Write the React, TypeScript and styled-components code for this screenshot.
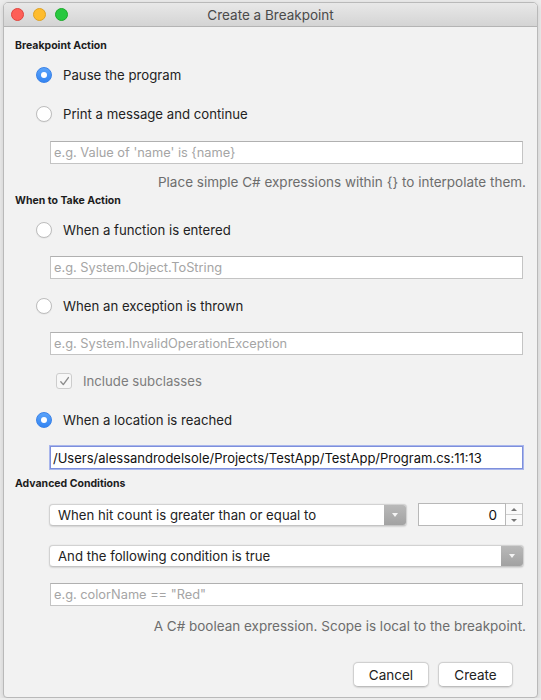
import React, { useState } from "react";
import styled, { createGlobalStyle, css } from "styled-components";

const GlobalStyle = createGlobalStyle`
  html, body {
    margin: 0;
    padding: 0;
    background: #ececec;
  }
  * {
    box-sizing: border-box;
  }
  body {
    font-family: Inter, "Liberation Sans", Arial, sans-serif;
    color: #262626;
  }
`;

const Window = styled.div`
  width: 535px;
  margin: 2px 0 0 3px;
  height: 696px;
  background: #f2f2f2;
  border: 1px solid #b9b9b9;
  border-radius: 5px 5px 4px 4px;
  box-shadow: 0 2px 6px rgba(0, 0, 0, 0.15);
  display: flex;
  flex-direction: column;
  overflow: hidden;
`;

const TitleBar = styled.div`
  height: 24px;
  flex: none;
  display: flex;
  align-items: center;
  position: relative;
  background: linear-gradient(#e8e8e8, #d4d4d4);
  border-bottom: 1px solid #b4b4b4;
`;

const Lights = styled.div`
  display: flex;
  gap: 9px;
  padding-left: 7px;
`;

const Light = styled.span<{ $color: string; $edge: string }>`
  width: 13px;
  height: 13px;
  border-radius: 50%;
  background: ${({ $color }) => $color};
  border: 0.5px solid ${({ $edge }) => $edge};
`;

const Title = styled.div`
  position: absolute;
  inset: 0;
  display: flex;
  align-items: center;
  justify-content: center;
  font-size: 13.5px;
  color: #4a4a4a;
  pointer-events: none;
`;

const Body = styled.div`
  flex: 1;
  display: flex;
  flex-direction: column;
  padding: 0 13px 0 11px;
`;

const SectionTitle = styled.div<{ $top: number }>`
  margin-top: ${({ $top }) => $top}px;
  height: 14px;
  line-height: 14px;
  font-size: 10.5px;
  font-weight: 700;
  color: #1c1c1c;
`;

const OptionRow = styled.label<{ $top: number }>`
  margin-top: ${({ $top }) => $top}px;
  height: 20px;
  display: flex;
  align-items: center;
  gap: 11px;
  padding-left: 21px;
  font-size: 13.2px;
  color: #222;
`;

const RadioDot = styled.span<{ $on: boolean }>`
  width: 16px;
  height: 16px;
  border-radius: 50%;
  flex: none;
  display: flex;
  align-items: center;
  justify-content: center;
  ${({ $on }) =>
    $on
      ? css`
          background: linear-gradient(#5aa3fa, #3485f2);
          border: 1px solid #3a82e8;
          &::after {
            content: "";
            width: 6px;
            height: 6px;
            border-radius: 50%;
            background: #fff;
          }
        `
      : css`
          background: #fff;
          border: 1px solid #bdbdbd;
          box-shadow: 0 0.5px 1px rgba(0, 0, 0, 0.08);
        `}
`;

const Field = styled.input<{ $top: number; $focused?: boolean }>`
  margin: ${({ $top }) => $top}px 1px 0 35px;
  height: 23px;
  flex: none;
  padding: 0 3px;
  font: inherit;
  font-size: 12.8px;
  color: #111;
  background: #fff;
  border: 1px solid #c4c4c4;
  border-top-color: #b0b0b0;
  outline: none;
  &::placeholder {
    color: #a5a5a5;
  }
  ${({ $focused }) =>
    $focused &&
    css`
      border: 1px solid #7d8fdc;
      box-shadow: 0 0 0 1px #a9b6ec;
      font-size: 13px;
      padding-left: 2px;
    `}
`;

const Hint = styled.div<{ $top: number }>`
  margin: ${({ $top }) => $top}px -2px 0 0;
  height: 16px;
  line-height: 16px;
  text-align: right;
  font-size: 13.5px;
  color: #6d6d6d;
`;

const CheckRow = styled.label<{ $top: number }>`
  margin: ${({ $top }) => $top}px 0 0 41px;
  height: 20px;
  display: flex;
  align-items: center;
  gap: 11px;
  font-size: 13.2px;
  color: #7d7d7d;
`;

const CheckBox = styled.span`
  width: 16px;
  height: 16px;
  border-radius: 3px;
  border: 1px solid #cdcdcd;
  background: #f7f7f7;
  display: flex;
  align-items: center;
  justify-content: center;
`;

const ConditionRow = styled.div<{ $top: number }>`
  margin: ${({ $top }) => $top}px 0 0 34px;
  display: flex;
  align-items: center;
  gap: 11px;
`;

const Select = styled.div<{ $top?: number; $width?: number }>`
  ${({ $top }) => $top !== undefined && css`margin: ${$top}px 0 0 34px;`}
  ${({ $width }) => $width && css`width: ${$width}px;`}
  height: 22px;
  flex: none;
  display: flex;
  align-items: stretch;
  background: #fff;
  border: 1px solid #d2d2d2;
  border-bottom-color: #c4c4c4;
  border-radius: 4px;
  box-shadow: 0 0.5px 1.5px rgba(0, 0, 0, 0.12);
  overflow: hidden;
  font-size: 13.2px;
  color: #222;
`;

const SelectText = styled.div`
  flex: 1;
  display: flex;
  align-items: center;
  padding-left: 8px;
`;

const SelectArrow = styled.div`
  width: 22px;
  flex: none;
  display: flex;
  align-items: center;
  justify-content: center;
  background: linear-gradient(#b9b9b9, #a2a2a2);
  &::after {
    content: "";
    border-left: 3.5px solid transparent;
    border-right: 3.5px solid transparent;
    border-top: 4px solid #f4f4f4;
  }
`;

const NumberBox = styled.div`
  display: flex;
  align-items: stretch;
  height: 23px;
`;

const NumberField = styled.div`
  width: 88px;
  background: #fff;
  border: 1px solid #b8b8b8;
  display: flex;
  align-items: center;
  justify-content: flex-end;
  padding-right: 8px;
  font-size: 13.5px;
  color: #111;
`;

const Stepper = styled.div`
  width: 17px;
  display: flex;
  flex-direction: column;
  border: 1px solid #c4c4c4;
  border-left: none;
  background: #fafafa;
`;

const StepHalf = styled.div<{ $up: boolean }>`
  flex: 1;
  display: flex;
  align-items: center;
  justify-content: center;
  ${({ $up }) => $up && css`border-bottom: 1px solid #cfcfcf;`}
  &::after {
    content: "";
    border-left: 3px solid transparent;
    border-right: 3px solid transparent;
    ${({ $up }) =>
      $up
        ? css`border-bottom: 3.5px solid #777;`
        : css`border-top: 3.5px solid #777;`}
  }
`;

const Footer = styled.div`
  margin: 28px 11px 0 0;
  display: flex;
  justify-content: flex-end;
  gap: 9px;
`;

const Button = styled.button<{ $width: number }>`
  width: ${({ $width }) => $width}px;
  height: 25px;
  font: inherit;
  font-size: 13.5px;
  color: #222;
  background: #fff;
  border: 1px solid #d0d0d0;
  border-bottom-color: #bdbdbd;
  border-radius: 5px;
  box-shadow: 0 0.5px 1.5px rgba(0, 0, 0, 0.12);
  padding: 0;
`;

type ActionKind = "pause" | "print";
type WhenKind = "function" | "exception" | "location";

const App: React.FC = () => {
  const [action, setAction] = useState<ActionKind>("pause");
  const [when, setWhen] = useState<WhenKind>("location");
  const [location, setLocation] = useState(
    "/Users/alessandrodelsole/Projects/TestApp/TestApp/Program.cs:11:13"
  );

  return (
    <>
      <GlobalStyle />
      <Window>
        <TitleBar>
          <Lights>
            <Light $color="#fe5f57" $edge="#e0443e" />
            <Light $color="#febc2e" $edge="#dea123" />
            <Light $color="#28c840" $edge="#1aab29" />
          </Lights>
          <Title>Create a Breakpoint</Title>
        </TitleBar>

        <Body>
          <SectionTitle $top={12}>Breakpoint Action</SectionTitle>
          <OptionRow $top={12} onClick={() => setAction("pause")}>
            <RadioDot $on={action === "pause"} />
            Pause the program
          </OptionRow>
          <OptionRow $top={19} onClick={() => setAction("print")}>
            <RadioDot $on={action === "print"} />
            Print a message and continue
          </OptionRow>
          <Field $top={17} placeholder="e.g. Value of 'name' is {name}" />
          <Hint $top={10}>
            Place simple C# expressions within {"{}"} to interpolate them.
          </Hint>

          <SectionTitle $top={4}>When to Take Action</SectionTitle>
          <OptionRow $top={12} onClick={() => setWhen("function")}>
            <RadioDot $on={when === "function"} />
            When a function is entered
          </OptionRow>
          <Field $top={16} placeholder="e.g. System.Object.ToString" />
          <OptionRow $top={17} onClick={() => setWhen("exception")}>
            <RadioDot $on={when === "exception"} />
            When an exception is thrown
          </OptionRow>
          <Field
            $top={16}
            placeholder="e.g. System.InvalidOperationException"
          />
          <CheckRow $top={16}>
            <CheckBox>
              <svg width="11" height="11" viewBox="0 0 11 11">
                <path
                  d="M1.8 5.8 L4.3 8.6 L9.4 1.6"
                  fill="none"
                  stroke="#8c8c8c"
                  strokeWidth="1.4"
                  strokeLinecap="round"
                  strokeLinejoin="round"
                />
              </svg>
            </CheckBox>
            Include subclasses
          </CheckRow>
          <OptionRow $top={19} onClick={() => setWhen("location")}>
            <RadioDot $on={when === "location"} />
            When a location is reached
          </OptionRow>
          <Field
            $top={16}
            $focused
            value={location}
            onChange={(e) => setLocation(e.target.value)}
          />

          <SectionTitle $top={8}>Advanced Conditions</SectionTitle>
          <ConditionRow $top={12}>
            <Select $width={358}>
              <SelectText>When hit count is greater than or equal to</SelectText>
              <SelectArrow />
            </Select>
            <NumberBox>
              <NumberField>0</NumberField>
              <Stepper>
                <StepHalf $up />
                <StepHalf $up={false} />
              </Stepper>
            </NumberBox>
          </ConditionRow>
          <Select $top={19}>
            <SelectText>And the following condition is true</SelectText>
            <SelectArrow />
          </Select>
          <Field $top={16} placeholder='e.g. colorName == "Red"' />
          <Hint $top={12}>
            A C# boolean expression. Scope is local to the breakpoint.
          </Hint>

          <Footer>
            <Button $width={76}>Cancel</Button>
            <Button $width={75}>Create</Button>
          </Footer>
        </Body>
      </Window>
    </>
  );
};

export default App;
